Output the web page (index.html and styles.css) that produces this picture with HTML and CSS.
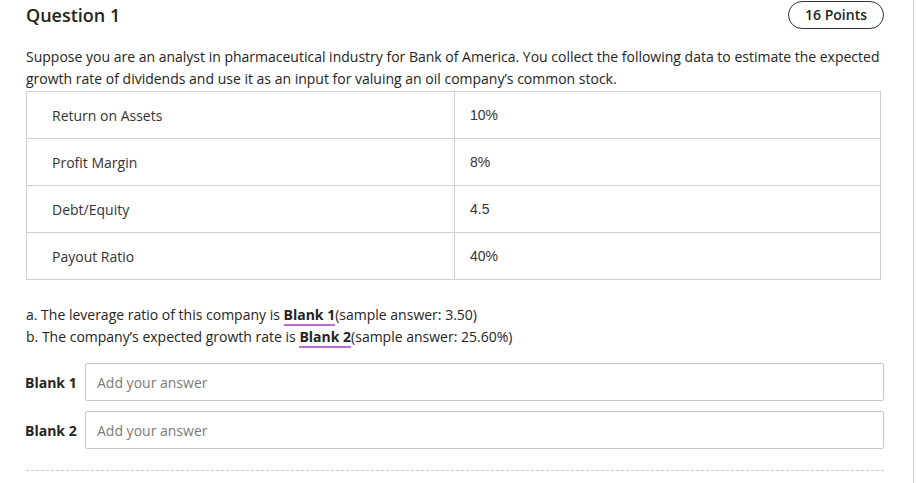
FILE: index.html
```html
<!DOCTYPE html>
<html>
<head>
<meta charset="utf-8">
<link rel="stylesheet" href="styles.css">
</head>
<body>
<div class="page">
  <div class="header">
    <h2 class="title">Question 1</h2>
    <span class="points">16 Points</span>
  </div>
  <p class="prompt">Suppose you are an analyst in pharmaceutical industry for Bank of America. You collect the following data to estimate the expected growth rate of dividends and use it as an input for valuing an oil company’s common stock.</p>
  <table class="data">
    <tr><td class="lbl">Return on Assets</td><td class="val">10%</td></tr>
    <tr><td class="lbl">Profit Margin</td><td class="val">8%</td></tr>
    <tr><td class="lbl">Debt/Equity</td><td class="val">4.5</td></tr>
    <tr><td class="lbl">Payout Ratio</td><td class="val">40%</td></tr>
  </table>
  <div class="parts">
    <div>a. The leverage ratio of this company is <b class="blank">Blank 1</b>(sample answer: 3.50)</div>
    <div>b. The company’s expected growth rate is <b class="blank">Blank 2</b>(sample answer: 25.60%)</div>
  </div>
  <div class="answers">
    <label class="row"><span class="rlabel">Blank 1</span><input class="field" type="text" placeholder="Add your answer"></label>
    <label class="row"><span class="rlabel">Blank 2</span><input class="field" type="text" placeholder="Add your answer"></label>
  </div>
  <div class="divider"></div>
</div>
</body>
</html>
```
FILE: styles.css
```css
html, body {
  margin: 0;
  padding: 0;
  background: #fff;
}
body {
  font-family: "Open Sans", "Noto Sans", sans-serif;
  color: #252423;
}
.page {
  width: 914px;
  height: 483px;
  box-sizing: border-box;
  padding: 0 29px 0 26px;
  border-right: 1px solid #d0d0d0;
  overflow: hidden;
}
.header {
  display: flex;
  justify-content: space-between;
  align-items: flex-start;
  height: 46px;
}
.title {
  margin: 2px 0 0 0;
  font-size: 18px;
  font-weight: 600;
  line-height: 26px;
  color: #252423;
}
.points {
  margin-top: 1px;
  box-sizing: border-box;
  height: 28px;
  padding: 0 16px;
  border: 1px solid #333;
  border-radius: 14px;
  font-size: 14px;
  font-weight: 600;
  line-height: 26px;
  color: #252423;
}
.prompt {
  margin: 0;
  font-size: 14px;
  line-height: 22px;
  color: #252423;
}
.data {
  margin-top: 1px;
  width: 855px;
  border-collapse: collapse;
}
.data td {
  border: 1px solid #cfcfcf;
  height: 46px;
  padding: 0;
  font-size: 14px;
  color: #333;
}
.data .lbl {
  width: 402px;
  padding-left: 25px;
  font-family: "Open Sans", sans-serif;
}
.data .val {
  padding-left: 15px;
  font-size: 14px;
  font-family: "Liberation Sans", Arial, sans-serif;
}
.parts {
  margin-top: 24px;
  font-size: 14px;
  line-height: 22px;
  color: #252423;
}
.blank {
  font-weight: 700;
  border-bottom: 2px solid #c46bd3;
  line-height: 18px;
  display: inline-block;
}
.answers {
  margin-top: 15px;
  display: flex;
  flex-direction: column;
  gap: 10px;
}
.row {
  display: flex;
  align-items: center;
  gap: 8px;
}
.rlabel {
  width: 52px;
  margin-left: -1px;
  font-size: 14px;
  font-weight: 700;
  color: #252423;
}
.field {
  flex: 1;
  box-sizing: border-box;
  height: 38px;
  margin: 0;
  padding: 0 11px;
  border: 1px solid #c8c8c8;
  border-radius: 2px;
  font-family: "Open Sans", sans-serif;
  font-size: 14px;
  color: #333;
  outline: none;
}
.field::placeholder {
  color: #7a7a7a;
}
.divider {
  margin-top: 21px;
  border-top: 1px dashed #c8c8c8;
}
```
